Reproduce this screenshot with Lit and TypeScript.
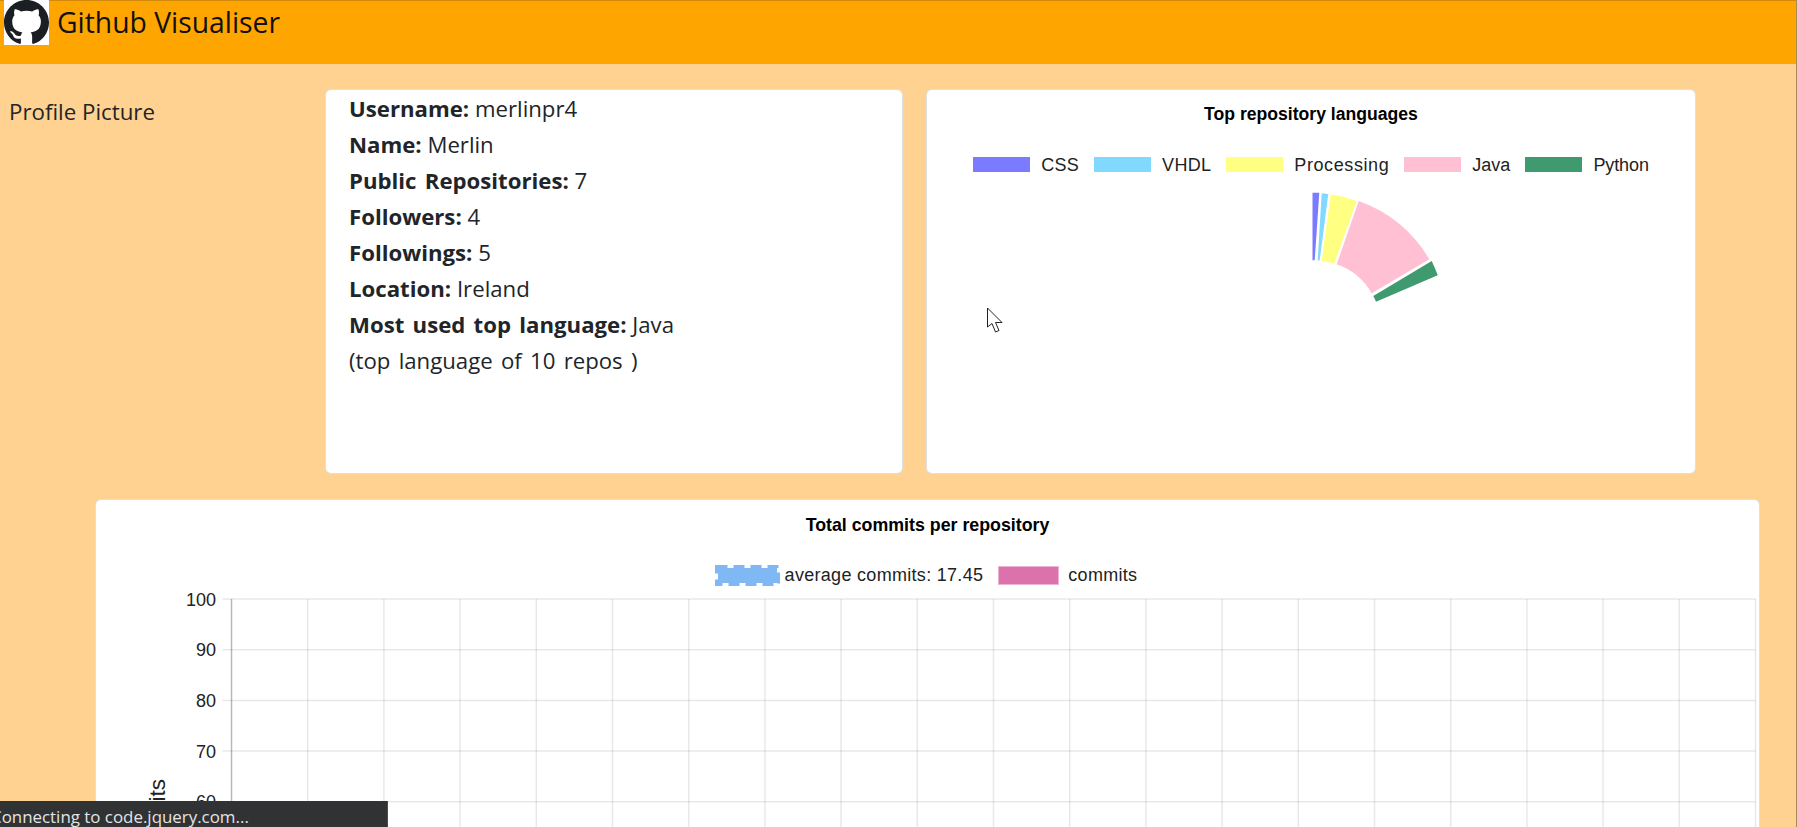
import { LitElement, html, css, svg } from "lit";
import { customElement } from "lit/decorators.js";

const LANGS = [
  { name: "CSS", color: "#7b7bff", spacing: 0.3 },
  { name: "VHDL", color: "#82d9ff", spacing: 0.3 },
  { name: "Processing", color: "#ffff82", spacing: 0.6 },
  { name: "Java", color: "#ffc0d4", spacing: 0 },
  { name: "Python", color: "#409a70", spacing: -0.1 },
];

const DETAILS = [
  ["Username:", "merlinpr4"],
  ["Name:", "Merlin"],
  ["Public Repositories:", "7"],
  ["Followers:", "4"],
  ["Followings:", "5"],
  ["Location:", "Ireland"],
  ["Most used top language:", "Java"],
];

// doughnut slices, caught mid animation in the reference
const SLICES = [
  { color: "#7b7bff", d: "M32.5 11.7 L39.3 11.7 L34.7 79.3 L32.5 79.3 Z" },
  { color: "#82d9ff", d: "M41.7 12.2 L48.3 13 L39.7 79.5 L37.7 79.5 Z" },
  { color: "#ffff82", d: "M50.7 13.3 A131.7 131.7 0 0 1 76.7 20 L54.3 82.7 A64.5 64.5 0 0 0 41.7 80 Z" },
  { color: "#ffc0d4", d: "M78.7 20 A131.7 131.7 0 0 1 149.3 78.3 L91.7 112.3 A64.5 64.5 0 0 0 56.7 83.3 Z" },
  { color: "#409a70", d: "M151.7 80 A131.7 131.7 0 0 1 157.7 94.3 L96 120.7 A64.5 64.5 0 0 0 93.3 115 Z" },
];

const TICKS = [100, 90, 80, 70, 60, 50];
const X0 = 135.5;
const COLS = 20;
const COL_W = 76.2;
const ROW_H = 50.7;
const PLOT_TOP = 8;

@customElement("app-root")
export class AppRoot extends LitElement {
  static styles = css`
    :host {
      display: block;
      position: relative;
      height: 827px;
      overflow: hidden;
      box-sizing: border-box;
      background: #ffd291;
      border-right: 1px solid #a98a5c;
      font-family: "Open Sans", "Noto Sans", sans-serif;
      color: #212529;
    }
    .navbar {
      display: flex;
      align-items: flex-start;
      box-sizing: border-box;
      height: 64px;
      background: #ffa500;
      box-shadow: inset 0 1px 0 #d18a0c;
      padding-left: 4px;
    }
    .logo {
      display: block;
      width: 45px;
      height: 45px;
      background: #fff;
      flex: none;
    }
    .brand {
      margin-left: 8px;
      font-size: 28.3px;
      line-height: 44px;
      color: #111;
    }
    .top-row {
      display: flex;
      align-items: flex-start;
      padding: 25px 0 0 9px;
    }
    .profile {
      width: 316px;
      flex: none;
      margin-top: 5px;
      font-size: 22.3px;
      line-height: 36px;
    }
    .card {
      box-sizing: border-box;
      background: #fff;
      border: 1px solid rgba(0, 0, 0, 0.125);
      border-radius: 6px;
      flex: none;
    }
    .info {
      width: 578px;
      height: 385px;
      padding: 1px 0 0 23px;
      font-size: 22.2px;
      line-height: 36px;
    }
    .info b {
      font-weight: 700;
      word-spacing: 2.5px;
    }
    .info .note {
      word-spacing: 2.5px;
    }
    .langs {
      width: 770px;
      height: 385px;
      margin-left: 23px;
      display: flex;
      flex-direction: column;
      align-items: center;
    }
    .chart-font {
      font-family: "Liberation Sans", Arial, sans-serif;
    }
    .title {
      font-weight: 700;
      line-height: 22px;
      color: #000;
      text-align: center;
    }
    .langs .title {
      margin-top: 13px;
      font-size: 17.6px;
    }
    .legend {
      display: flex;
      align-items: center;
      font-size: 18px;
      line-height: 22px;
      color: #222;
    }
    .langs .legend {
      margin-top: 28.5px;
      gap: 15px;
    }
    .legend-item {
      display: flex;
      align-items: center;
      gap: 11px;
    }
    .swatch {
      display: block;
      width: 57px;
      height: 15px;
    }
    .pie {
      display: block;
      align-self: flex-start;
      width: 180px;
      height: 130px;
      margin: 5.5px 0 0 353px;
    }
    .commits {
      width: 1665px;
      height: 500px;
      margin: 25px 0 0 95px;
    }
    .commits .title {
      margin-top: 14px;
      font-size: 17.8px;
    }
    .commits .legend {
      justify-content: center;
      margin-top: 28px;
      margin-left: -3px;
      gap: 15px;
      letter-spacing: 0.3px;
    }
    .avg-swatch {
      display: block;
      width: 65px;
      height: 21px;
    }
    .commit-swatch {
      display: block;
      box-sizing: border-box;
      width: 61px;
      height: 19px;
      background: #dc72ab;
      border: 1px solid #eeb3d2;
    }
    .commits .legend-item {
      gap: 5px;
    }
    .commits .legend-item + .legend-item {
      gap: 9px;
    }
    .plot {
      display: block;
      width: 1663px;
      height: 240px;
      margin-top: 5px;
    }
    .plot text {
      font-family: "Liberation Sans", Arial, sans-serif;
      fill: #222;
    }
    .tick {
      font-size: 18px;
      text-anchor: end;
    }
    .axis-label {
      font-size: 22.5px;
    }
    .status {
      position: absolute;
      left: 0;
      bottom: 0;
      box-sizing: border-box;
      width: 388px;
      height: 26px;
      overflow: hidden;
      background: #303234;
      border-right: 1px solid #4b4d4f;
      color: #e4e4e4;
      font-size: 16.9px;
      line-height: 31px;
      white-space: nowrap;
    }
    .status span {
      display: block;
      margin-left: -9px;
    }
    .cursor {
      position: absolute;
      left: 986px;
      top: 307px;
      width: 20px;
      height: 27px;
    }
  `;

  renderPlot() {
    const rows = TICKS.map((_, i) => PLOT_TOP + i * ROW_H);
    const cols = Array.from({ length: COLS + 1 }, (_, i) => X0 + i * COL_W);
    return html`
      <svg class="plot" viewBox="0 0 1663 240">
        ${rows.map(
          (y) => svg`<line x1=${X0 - 9} x2=${X0 + COLS * COL_W} y1=${y} y2=${y} stroke="rgba(0,0,0,0.09)" stroke-width="1.5"></line>`
        )}
        ${cols.map(
          (x, i) => svg`<line x1=${x} x2=${x} y1=${PLOT_TOP} y2="240"
            stroke=${i === 0 ? "rgba(0,0,0,0.28)" : "rgba(0,0,0,0.09)"} stroke-width="1.5"></line>`
        )}
        ${TICKS.map(
          (t, i) => svg`<text class="tick" x="120" y=${PLOT_TOP + i * ROW_H + 6.5}>${t}</text>`
        )}
        <text class="axis-label" transform="translate(69 271.7) rotate(-90)">commits</text>
      </svg>
    `;
  }

  render() {
    return html`
      <nav class="navbar">
        <svg class="logo" viewBox="0 0 16 16">
          <path
            fill="#1b1f23"
            d="M8 0C3.58 0 0 3.58 0 8c0 3.54 2.29 6.53 5.47 7.59.4.07.55-.17.55-.38 0-.19-.01-.82-.01-1.49-2.01.37-2.53-.49-2.69-.94-.09-.23-.48-.94-.82-1.13-.28-.15-.68-.52-.01-.53.63-.01 1.08.58 1.23.82.72 1.21 1.87.87 2.33.66.07-.52.28-.87.51-1.07-1.78-.2-3.64-.89-3.64-3.95 0-.87.31-1.59.82-2.15-.08-.2-.36-1.02.08-2.12 0 0 .67-.21 2.2.82.64-.18 1.32-.27 2-.27.68 0 1.36.09 2 .27 1.53-1.04 2.2-.82 2.2-.82.44 1.1.16 1.92.08 2.12.51.56.82 1.27.82 2.15 0 3.07-1.87 3.75-3.65 3.95.29.25.54.73.54 1.48 0 1.07-.01 1.93-.01 2.2 0 .21.15.46.55.38A8.013 8.013 0 0016 8c0-4.42-3.58-8-8-8z"
          ></path>
        </svg>
        <span class="brand">Github Visualiser</span>
      </nav>

      <div class="top-row">
        <div class="profile">Profile Picture</div>
        <div class="card info">
          ${DETAILS.map(([k, v]) => html`<div><b>${k}</b> ${v}</div>`)}
          <div class="note">(top language of 10 repos )</div>
        </div>
        <div class="card langs chart-font">
          <div class="title">Top repository languages</div>
          <div class="legend">
            ${LANGS.map(
              (l) => html`<div class="legend-item" style="letter-spacing:${l.spacing}px">
                <span class="swatch" style="background:${l.color}"></span>${l.name}
              </div>`
            )}
          </div>
          <svg class="pie" viewBox="0 0 180 130">
            ${SLICES.map((s) => svg`<path d=${s.d} fill=${s.color}></path>`)}
          </svg>
        </div>
      </div>

      <div class="card commits chart-font">
        <div class="title">Total commits per repository</div>
        <div class="legend">
          <div class="legend-item">
            <svg class="avg-swatch" viewBox="0 0 65 21">
              <rect x="3" y="3" width="59" height="15" fill="#7fb8f5"></rect>
              <rect x="1.5" y="1.5" width="62" height="18" fill="none" stroke="#7fb8f5" stroke-width="3" stroke-dasharray="11 6"></rect>
            </svg>
            average commits: 17.45
          </div>
          <div class="legend-item"><span class="commit-swatch"></span>commits</div>
        </div>
        ${this.renderPlot()}
      </div>

      <svg class="cursor" viewBox="0 0 20 27">
        <path d="M1.5 1 L1.5 20 L6 16.5 L9.5 25 L13 23.5 L9.5 15.5 L16 15.5 Z" fill="#fff" stroke="#222" stroke-width="1"></path>
      </svg>

      <div class="status"><span>Connecting to code.jquery.com...</span></div>
    `;
  }
}
